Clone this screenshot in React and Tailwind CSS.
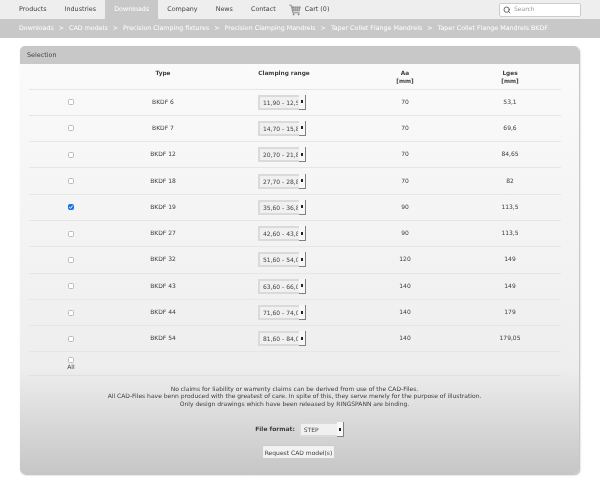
import { Search } from "lucide-react";

const navItems = ["Products", "Industries", "Downloads", "Company", "News", "Contact"];
const crumbs = [
  "Downloads",
  "CAD models",
  "Precision Clamping fixtures",
  "Precision Clamping Mandrels",
  "Taper Collet Flange Mandrels",
  "Taper Collet Flange Mandrels BKDF",
];
const rows = [
  { type: "BKDF 6", range: "11,90 - 12,50", aa: "70", lges: "53,1" },
  { type: "BKDF 7", range: "14,70 - 15,80", aa: "70", lges: "69,6" },
  { type: "BKDF 12", range: "20,70 - 21,80", aa: "70", lges: "84,65" },
  { type: "BKDF 18", range: "27,70 - 28,80", aa: "70", lges: "82" },
  { type: "BKDF 19", range: "35,60 - 36,80", aa: "90", lges: "113,5", checked: true },
  { type: "BKDF 27", range: "42,60 - 43,80", aa: "90", lges: "113,5" },
  { type: "BKDF 32", range: "51,60 - 54,00", aa: "120", lges: "149" },
  { type: "BKDF 43", range: "63,60 - 66,00", aa: "140", lges: "149" },
  { type: "BKDF 44", range: "71,60 - 74,00", aa: "140", lges: "179" },
  { type: "BKDF 54", range: "81,60 - 84,00", aa: "140", lges: "179,05" },
];

const Check = ({ checked }) => (
  <span className="relative block h-[6px] w-[6px]">
    <input
      type="checkbox"
      defaultChecked={checked}
      className="m-0 block h-[6px] w-[6px] appearance-none rounded-[1.5px] border border-[#bbb] bg-white checked:border-[#1b74e4] checked:bg-[#1b74e4]"
    />
    {checked && (
      <svg viewBox="0 0 6 6" className="absolute left-0 top-0 h-[6px] w-[6px]">
        <path d="M1.3 3.1 2.5 4.4 4.7 1.5" fill="none" stroke="white" strokeWidth="1" />
      </svg>
    )}
  </span>
);

const Dropdown = ({ value, width }) => (
  <div className={`relative h-[15px] ${width} border-2 border-[#dadada] bg-[#f0f0f0] font-normal`}>
    <select
      defaultValue={value}
      className="h-full w-full appearance-none bg-transparent py-0 pl-[3px] pr-[6px] text-[6px] leading-[11px] text-[#444] outline-none"
    >
      <option>{value}</option>
    </select>
    <span className="absolute -bottom-[2px] -right-[2px] -top-[2px] flex w-[7px] items-center justify-center border-b border-r border-[#808080] bg-[#f7f7f7]">
      <span className="h-[3px] w-[2px] bg-[#222]"></span>
    </span>
  </div>
);

const CartIcon = () => (
  <svg viewBox="0 0 12 12" className="h-[12px] w-[12px]">
    <path d="M0.3 1.2H2.3L3.8 8.8H10.6" fill="none" stroke="#808080" strokeWidth="0.9" />
    <path d="M2.8 2.6H11.8L10.6 7.2H3.7Z" fill="#8c8c8c" />
    <path d="M5.3 2.6V7.2M7.3 2.6V7.2M9.3 2.6V7.2M3.2 4.9H11.2" stroke="#e4e4e4" strokeWidth="0.4" />
    <circle cx="4.6" cy="10.4" r="0.9" fill="#808080" />
    <circle cx="9.6" cy="10.4" r="0.9" fill="#808080" />
  </svg>
);

export default function App() {
  return (
    <div className="h-[479px] w-[600px] overflow-hidden bg-white font-['DejaVu_Sans',sans-serif] text-[6px] text-[#3d3d3d] antialiased blur-[0.25px] [text-rendering:geometricPrecision]">
      <div className="flex h-[19px] items-center bg-[#eeeeee] pl-[10px] pr-[19px] text-[6.4px]">
        {navItems.map((item) => (
          <div
            key={item}
            className={`flex h-full items-center px-[9px] ${item === "Downloads" ? "bg-[#c8c8c8] text-white" : "text-[#444]"}`}
          >
            {item}
          </div>
        ))}
        <div className="ml-[4px] flex items-center gap-[4px] text-[#444]">
          <CartIcon />
          <span>Cart (0)</span>
        </div>
        <div className="ml-auto flex h-[14px] w-[82px] items-center gap-[3px] rounded-[2px] border border-[#ccc] bg-white pl-[3px] text-[6px] text-[#999]">
          <Search size={8} strokeWidth={2.4} className="text-[#444]" />
          <span>Search</span>
        </div>
      </div>

      <div className="flex h-[19px] items-center gap-[5px] bg-[#c8c8c8] pl-[19px] text-[6.33px] text-white">
        {crumbs.map((crumb, i) => (
          <div key={crumb} className="flex items-center gap-[5px] whitespace-nowrap">
            {i > 0 && <span>&gt;</span>}
            <span>{crumb}</span>
          </div>
        ))}
      </div>

      <div className="ml-[20px] mt-[8px] h-[427.5px] w-[559px] overflow-hidden rounded-[5px] bg-gradient-to-b from-[#fbfbfb] via-[#eeeeee] via-[75%] to-[#c6c6c6] shadow-[1px_1px_2px_rgba(0,0,0,0.3)]">
        <div className="flex h-[18px] items-center bg-[#c8c8c8] pl-[7px] pt-[1px] text-[6.4px] text-[#444]">Selection</div>

        <div className="mx-[9px] w-[532px]">
          <div className="grid h-[25.5px] grid-cols-[84px_100px_138px_108px_102px] border-b border-[#e6e6e6] pt-[5.5px] text-center text-[5.8px] font-bold leading-[8px]">
            <div></div>
            <div>Type</div>
            <div className="pl-[4px]">Clamping range</div>
            <div>Aa<br />[mm]</div>
            <div>Lges<br />[mm]</div>
          </div>
          {rows.map((row) => (
            <div
              key={row.type}
              className="grid h-[26.3px] grid-cols-[84px_100px_138px_108px_102px] items-center border-b border-[#e6e6e6] text-center"
            >
              <div className="flex justify-center"><Check checked={row.checked} /></div>
              <div>{row.type}</div>
              <div className="flex justify-center"><Dropdown value={row.range} width="w-[48px]" /></div>
              <div>{row.aa}</div>
              <div>{row.lges}</div>
            </div>
          ))}
          <div className="grid h-[23.6px] grid-cols-[84px_100px_138px_108px_102px] border-b border-[#e0e0e0] text-center">
            <div className="flex flex-col items-center justify-center gap-[1px] pt-[1px] leading-[8px]">
              <Check />
              <span>All</span>
            </div>
          </div>
        </div>

        <div className="mt-[9.5px] pr-[10px] text-center leading-[7.7px]">
          <p>No claims for liability or warrenty claims can be derived from use of the CAD-Files.</p>
          <p>All CAD-Files have benn produced with the greatest of care. In spite of this, they serve merely for the purpose of illustration.</p>
          <p>Only design drawings which have been released by RINGSPANN are binding.</p>
        </div>

        <div className="mt-[13.5px] flex items-center justify-center gap-[4px] font-bold">
          <span>File format:</span>
          <Dropdown value="STEP" width="w-[45px]" />
        </div>

        <div className="mt-[8px] flex justify-center pr-[2px]">
          <button className="h-[14px] w-[73px] border border-[#ccc] bg-[#f2f2f2] text-[6px] text-[#3d3d3d]">Request CAD model(s)</button>
        </div>
      </div>
    </div>
  );
}
